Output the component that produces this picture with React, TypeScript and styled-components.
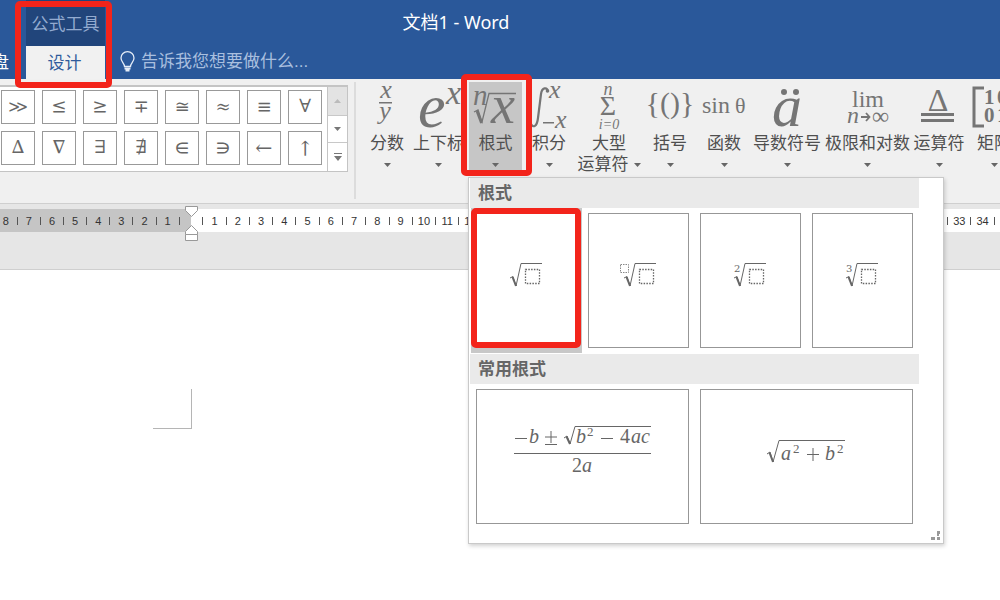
import React from "react";
import styled, { createGlobalStyle, css } from "styled-components";

const ui = `"Noto Sans", "Noto Sans CJK SC", sans-serif`;
const serif = `"Liberation Serif", serif`;

const GlobalStyle = createGlobalStyle`
  * { box-sizing: border-box; }
  body { margin: 0; background: #fff; font-family: ${ui}; font-size: 17px; overflow: hidden; }
  button { margin: 0; padding: 0; border: 0; background: none; font: inherit; color: inherit; cursor: pointer; }
  svg { display: block; overflow: visible; flex: none; }
`;

const Window = styled.div`
  min-height: 100vh;
  display: flex;
  flex-direction: column;
  overflow: hidden;
`;

const Header = styled.header`
  display: flex;
  height: 79px;
  background: #2a589a;
  color: #fff;
`;

const ClippedTab = styled.button`
  flex: none;
  width: 26px;
  height: 33px;
  align-self: flex-end;
  display: flex;
  justify-content: flex-end;
  align-items: center;
  padding: 0 17px 2px 0;
  white-space: nowrap;
  line-height: 24px;
`;

const ContextGroup = styled.div`
  position: relative;
  flex: none;
  width: 79px;
  display: flex;
  flex-direction: column;
`;

const ContextTitle = styled.div`
  height: 46px;
  display: flex;
  align-items: center;
  justify-content: center;
  padding-bottom: 2px;
  background: #21457b;
  color: #93abd0;
`;

const ActiveTab = styled.button`
  flex: 1;
  padding: 0 2px 3px 0;
  background: #f1f1f1;
  color: #2f5b9c;
`;

const HeaderMain = styled.div`
  flex: 1;
  min-width: 0;
  display: flex;
  flex-direction: column;
`;

const WindowTitle = styled.h1`
  margin: 0;
  height: 46px;
  padding-right: 193px;
  font-size: 18px;
  font-weight: 400;
  line-height: 44px;
  text-align: center;
`;

const TellMe = styled.label`
  flex: 1;
  display: flex;
  align-items: center;
  gap: 6px;
  padding: 0 0 2px 15px;
`;

const TellInput = styled.input`
  width: 240px;
  padding: 0;
  border: 0;
  outline: 0;
  background: none;
  color: #fff;
  font-family: "Liberation Sans", "Noto Sans CJK SC", sans-serif;
  font-size: 17px;
  &::placeholder { color: #a9bfdf; opacity: 1; }
`;

const Marker = styled.span<{ $inset: string }>`
  position: absolute;
  inset: ${(p) => p.$inset};
  border: 6px solid #f3241b;
  border-radius: 5px;
  pointer-events: none;
  z-index: 3;
`;

const Ribbon = styled.div`
  display: flex;
  align-items: flex-start;
  height: 125px;
  padding-top: 3px;
  background: #f0f0f0;
  border-bottom: 1px solid #cfcfcf;
`;

const Gallery = styled.div`
  flex: none;
  display: flex;
  height: 90px;
  padding-top: 3px;
`;

const SymbolGrid = styled.div`
  display: grid;
  grid-template-columns: repeat(8, 34px);
  grid-auto-rows: 34px;
  gap: 7px;
  padding: 3px 5px 4px 1px;
  background: #fff;
  border: solid #c4c4c4;
  border-width: 2px 1px 1px 0;
`;

const SymbolButton = styled.button`
  border: 1px solid #999;
  background: #fff;
  color: #666;
  font-family: "DejaVu Math TeX Gyre", "DejaVu Sans", sans-serif;
  font-size: 18px;
  line-height: 30px;
  overflow: hidden;
`;

const ScrollColumn = styled.div`
  width: 20px;
  display: grid;
  grid-template-rows: 28px 27px 1fr;
  border: solid #c4c4c4;
  border-width: 2px 1px 1px 0;
  background: #fff;
`;

const ScrollButton = styled.button<{ $off?: boolean }>`
  display: flex;
  align-items: center;
  justify-content: center;
  background: ${(p) => (p.$off ? "#e3e3e3" : "#fff")};
  color: ${(p) => (p.$off ? "#bbb" : "#777")};
  & + & { border-top: 1px solid #c8c8c8; }
`;

const Divider = styled.div`
  flex: none;
  width: 2px;
  height: 117px;
  margin: 0 10px 0 6px;
  background: #dcdcdc;
`;

const Tools = styled.div`
  display: flex;
  flex: 1;
  min-width: 0;
`;

const ToolSlot = styled.div<{ $w: number }>`
  position: relative;
  flex: none;
  width: ${(p) => p.$w}px;
`;

const ToolButton = styled.button<{ $open?: boolean }>`
  width: 100%;
  display: flex;
  flex-direction: column;
  align-items: center;
  color: #4f4f4f;
  ${(p) => p.$open && css`background: #c6c6c6;`}
`;

const ToolLine = styled.span`
  height: 21px;
  line-height: 21px;
  display: flex;
  align-items: center;
  justify-content: center;
  gap: 5px;
  white-space: nowrap;
  & > svg { margin-top: 2px; fill: #666; }
`;

const Panel = styled.div`
  position: absolute;
  top: 95px;
  left: -1px;
  width: 476px;
  z-index: 2;
  padding: 0 24px 13px 1px;
  background: #fff;
  border: 1px solid #c9c9c9;
  box-shadow: 1px 2px 4px rgba(0, 0, 0, 0.18);
`;

const SectionTitle = styled.h2`
  margin: 0;
  height: 30px;
  padding-left: 8px;
  background: #eaeaea;
  color: #666;
  font-size: 17px;
  font-weight: 700;
  line-height: 30px;
`;

const Cards = styled.div<{ $cols: number }>`
  display: grid;
  grid-template-columns: repeat(${(p) => p.$cols}, 1fr);
  gap: 11px;
  padding: 5px 6px 6px;
`;

const CardSlot = styled.div<{ $hover?: boolean }>`
  position: relative;
  display: flex;
  ${(p) => p.$hover && css`box-shadow: 0 0 0 5px #c8c8c8;`}
`;

const Card = styled.button`
  flex: 1;
  height: 135px;
  display: flex;
  align-items: center;
  justify-content: center;
  padding: 0 1px 12px 0;
  border: 1px solid #979797;
  background: #fff;
`;

const Grip = styled.span`
  position: absolute;
  right: 3px;
  bottom: 3px;
`;

const RulerZone = styled.div`
  height: 66px;
  padding-top: 5px;
  background: #e6e6e6;
  border-bottom: 1px solid #cfcfcf;
`;

const Ruler = styled.div`
  position: relative;
  display: flex;
  height: 23px;
  background: #fff;
`;

const RulerMargin = styled.div`
  flex: none;
  width: 191px;
  padding-right: 6px;
  background: #c5c5c5;
  display: flex;
`;

const RulerBody = styled.div`
  flex: 1;
  min-width: 0;
  padding-left: 6px;
  display: flex;
`;

const Scale = styled.div<{ $n: number }>`
  flex: 1;
  display: grid;
  grid-template-columns: repeat(${(p) => p.$n}, minmax(0, 1fr));
`;

const ScaleCell = styled.span`
  display: flex;
  align-items: center;
  justify-content: center;
  color: #333;
  font-family: "Liberation Sans", sans-serif;
  font-size: 11px;
`;

const Tick = styled.i`
  width: 1px;
  height: 8px;
  background: #555;
`;

const Indent = styled.span`
  position: absolute;
  left: 185px;
  top: -3px;
`;

const Page = styled.main`
  flex: 1;
  background: #fff;
  padding: 119px 0 0 153px;
`;

const MarginCorner = styled.div`
  width: 39px;
  height: 40px;
  border: solid #b5b5b5;
  border-width: 0 1px 1px 0;
`;

const Caret = ({ up = false }: { up?: boolean }) => (
  <svg width="7" height="4" viewBox="0 0 7 4" fill="currentColor">
    <path d={up ? "M0 4L3.500 0L7 4Z" : "M0 0H7L3.500 4Z"} />
  </svg>
);

type GlyphProps = { x: number; y: number; s: number; up?: boolean; bold?: boolean; mid?: boolean; children: React.ReactNode };
const Glyph = ({ x, y, s, up, bold, mid, children }: GlyphProps) => (
  <text
    x={x}
    y={y}
    fontSize={s}
    fontFamily={serif}
    fontStyle={up ? "normal" : "italic"}
    fontWeight={bold ? 700 : 400}
    textAnchor={mid ? "middle" : "start"}
  >
    {children}
  </text>
);

const ToolIcon = ({ w, children }: { w: number; children: React.ReactNode }) => (
  <svg width={w} height="50" viewBox={`0 0 ${w} 50`} fill="#757575" stroke="none" aria-hidden="true">
    {children}
  </svg>
);

type Tool = { id: string; w: number; lines: string[]; icon: React.ReactNode };

const tools: Tool[] = [
  {
    id: "fraction", w: 42, lines: ["分数"],
    icon: (<><Glyph x={20} y={16} s={26} mid>x</Glyph><path d="M13 20H26V21.500H13Z" /><Glyph x={19} y={37} s={26} mid>y</Glyph></>),
  },
  {
    id: "script", w: 61, lines: ["上下标"],
    icon: (<><Glyph x={10} y={45} s={62}>e</Glyph><Glyph x={38} y={22} s={34}>x</Glyph></>),
  },
  {
    id: "radical", w: 53, lines: ["根式"],
    icon: (
      <>
        <Glyph x={4} y={23} s={29}>n</Glyph>
        <Glyph x={22} y={41} s={54}>x</Glyph>
        <path d="M5 30L9 28L13 40L20 11.500H47" fill="none" stroke="#757575" strokeWidth="1.300" />
        <path d="M8 29L12.500 41" stroke="#757575" strokeWidth="2.800" />
      </>
    ),
  },
  {
    id: "integral", w: 54, lines: ["积分"],
    icon: (
      <>
        <path d="M26 9C25 5 20 5 19 12L16 36C15 45 11 46 9 42" fill="none" stroke="#757575" strokeWidth="2.200" />
        <circle cx="25.500" cy="9" r="1.800" />
        <Glyph x={27} y={16} s={26}>x</Glyph>
        <path d="M21 40H32V41.500H21Z" />
        <Glyph x={33} y={46} s={26}>x</Glyph>
      </>
    ),
  },
  {
    id: "large", w: 66, lines: ["大型", "运算符"],
    icon: (<><Glyph x={32} y={13} s={18} mid>n</Glyph><Glyph x={32} y={33} s={28} up mid>Σ</Glyph><Glyph x={33} y={47} s={14} mid>i=0</Glyph></>),
  },
  { id: "bracket", w: 56, lines: ["括号"], icon: <Glyph x={28} y={31} s={30} up mid>{"{()}"}</Glyph> },
  {
    id: "function", w: 52, lines: ["函数"],
    icon: (<><Glyph x={4} y={31} s={24} up>sin</Glyph><Glyph x={37} y={31} s={22} up>θ</Glyph></>),
  },
  {
    id: "accent", w: 74, lines: ["导数符号"],
    icon: (<><Glyph x={22} y={44} s={60}>a</Glyph><circle cx="34" cy="10" r="3" /><circle cx="46" cy="10" r="3" /></>),
  },
  {
    id: "limit", w: 87, lines: ["极限和对数"],
    icon: (
      <>
        <Glyph x={28} y={25} s={24} up>lim</Glyph>
        <Glyph x={23} y={41} s={24}>n</Glyph>
        <path d="M37 35H45M42 31L45.500 35L42 39" fill="none" stroke="#757575" strokeWidth="1.800" />
        <Glyph x={48} y={42} s={24} up>∞</Glyph>
      </>
    ),
  },
  {
    id: "operator", w: 56, lines: ["运算符"],
    icon: (<><Glyph x={27} y={29} s={32} up mid>Δ</Glyph><path d="M10 31H43V34H10ZM10 37H43V40H10Z" /></>),
  },
  {
    id: "matrix", w: 54, lines: ["矩阵"],
    icon: (
      <>
        <path d="M17 6H7V44H17" fill="none" stroke="#757575" strokeWidth="3" />
        <Glyph x={17} y={22} s={21} up bold>1</Glyph><Glyph x={30} y={22} s={21} up bold>0</Glyph>
        <Glyph x={17} y={40} s={21} up bold>0</Glyph><Glyph x={30} y={40} s={21} up bold>1</Glyph>
      </>
    ),
  },
];

const symbols = ["≫", "≤", "≥", "∓", "≅", "≈", "≡", "∀", "∆", "∇", "∃", "∄", "∈", "∋", "←", "↑"];

const Radical = ({ x }: { x: number }) => (
  <g fill="none" stroke="#666">
    <path d={`M${x} 16L${x + 3} 14.500L${x + 6} 24L${x + 11} 1.500H${x + 32}`} />
    <path d={`M${x + 2.5} 15L${x + 6} 24`} strokeWidth="2" />
    <rect x={x + 15.5} y="7.500" width="14" height="14" strokeWidth="1.300" strokeDasharray="1.500 1.300" />
  </g>
);

const RadicalCard = ({ index }: { index: "" | "□" | "2" | "3" }) => {
  const shift = index === "□" ? 4 : 0;
  return (
    <svg width={32 + shift} height="25" viewBox={`0 0 ${32 + shift} 25`} aria-hidden="true">
      <Radical x={shift} />
      {index === "□" && <rect x="0.500" y="2.500" width="8" height="8" fill="none" stroke="#888" strokeDasharray="1.500 1" />}
      {(index === "2" || index === "3") && (
        <text x="0" y="10" fontSize="10" fontFamily="DejaVu Serif" fill="#666">{index}</text>
      )}
    </svg>
  );
};

const Quadratic = () => (
  <svg width="137" height="56" viewBox="0 0 137 56" fill="#666" aria-hidden="true">
    <path d="M1 15.500H13M87 15.500H99M31 14H43M37 8V20M31 21.500H43M0 30.500H137" fill="none" stroke="#666" />
    <path d="M50 15L53 13L56 21L61 3.500H137" fill="none" stroke="#666" />
    <path d="M52.500 13.500L56 21" stroke="#666" strokeWidth="2" />
    <Glyph x={15} y={20} s={20}>b</Glyph>
    <Glyph x={62} y={20} s={20}>b</Glyph>
    <Glyph x={73} y={13} s={13} up>2</Glyph>
    <Glyph x={106} y={20} s={20} up>4</Glyph>
    <Glyph x={117} y={20} s={20}>ac</Glyph>
    <Glyph x={58} y={49} s={20} up>2</Glyph>
    <Glyph x={68} y={49} s={20}>a</Glyph>
  </svg>
);

const Hypotenuse = () => (
  <svg width="78" height="26" viewBox="0 0 78 26" fill="#666" aria-hidden="true">
    <path d="M0 16L3 14L6 24L12 2.500H78M40 16.500H52M46 10V23" fill="none" stroke="#666" />
    <path d="M2.500 14.500L6 24" stroke="#666" strokeWidth="2" />
    <Glyph x={14} y={22} s={20}>a</Glyph>
    <Glyph x={26} y={15} s={13} up>2</Glyph>
    <Glyph x={58} y={22} s={20}>b</Glyph>
    <Glyph x={70} y={15} s={13} up>2</Glyph>
  </svg>
);

const RadicalPanel = () => (
  <Panel>
    <SectionTitle>根式</SectionTitle>
    <Cards $cols={4}>
      <CardSlot $hover>
        <Card aria-label="平方根"><RadicalCard index="" /></Card>
        <Marker $inset="-5px -4px 0 -5px" />
      </CardSlot>
      <CardSlot><Card aria-label="带有次数的根式"><RadicalCard index="□" /></Card></CardSlot>
      <CardSlot><Card aria-label="二次平方根"><RadicalCard index="2" /></Card></CardSlot>
      <CardSlot><Card aria-label="立方根"><RadicalCard index="3" /></Card></CardSlot>
    </Cards>
    <SectionTitle>常用根式</SectionTitle>
    <Cards $cols={2}>
      <CardSlot><Card aria-label="二次公式"><Quadratic /></Card></CardSlot>
      <CardSlot><Card aria-label="勾股"><Hypotenuse /></Card></CardSlot>
    </Cards>
    <Grip>
      <svg width="9" height="9" viewBox="0 0 9 9" fill="#999">
        <path d="M6 0H9V3H6ZM6 6H9V9H6ZM0 6H4V9H0ZM6 3H8V5H6Z" />
      </svg>
    </Grip>
  </Panel>
);

const marks = (nums: number[], tickFirst: boolean) =>
  nums.flatMap((n) => {
    const tick = <ScaleCell key={`t${n}`}><Tick /></ScaleCell>;
    const num = <ScaleCell key={n}>{n}</ScaleCell>;
    return tickFirst ? [tick, num] : [num, tick];
  });

export default function App() {
  return (
    <Window>
      <GlobalStyle />
      <Header>
        <ClippedTab>盘</ClippedTab>
        <ContextGroup>
          <ContextTitle>公式工具</ContextTitle>
          <ActiveTab>设计</ActiveTab>
          <Marker $inset="1px -7px -9px -11px" />
        </ContextGroup>
        <HeaderMain>
          <WindowTitle>文档1 - Word</WindowTitle>
          <TellMe>
            <svg width="15" height="21" viewBox="0 0 15 21" fill="none" stroke="#e4ecf7" strokeWidth="1.300" aria-hidden="true">
              <path d="M4.500 15.500C4.500 12 1 11 1 7A6.500 6.300 0 0 1 14 7C14 11 10.500 12 10.500 15.500Z" />
              <path d="M4.500 17.500H10.500M5.500 19.500H9.500" strokeWidth="2" />
            </svg>
            <TellInput aria-label="告诉我您想要做什么" placeholder="告诉我您想要做什么..." />
          </TellMe>
        </HeaderMain>
      </Header>

      <Ribbon>
        <Gallery>
          <SymbolGrid>
            {symbols.map((s) => <SymbolButton key={s}>{s}</SymbolButton>)}
          </SymbolGrid>
          <ScrollColumn>
            <ScrollButton $off aria-label="上一行"><Caret up /></ScrollButton>
            <ScrollButton aria-label="下一行"><Caret /></ScrollButton>
            <ScrollButton aria-label="其他">
              <svg width="8" height="8" viewBox="0 0 8 8" fill="currentColor">
                <path d="M0 0H8V1H0ZM0 3H8L4 8Z" />
              </svg>
            </ScrollButton>
          </ScrollColumn>
        </Gallery>
        <Divider />
        <Tools>
          {tools.map((t) => (
            <ToolSlot key={t.id} $w={t.w}>
              <ToolButton $open={t.id === "radical"}>
                <ToolIcon w={t.w}>{t.icon}</ToolIcon>
                <ToolLine>{t.lines[0]}</ToolLine>
                <ToolLine>{t.lines[1]}<Caret /></ToolLine>
              </ToolButton>
              {t.id === "radical" && <Marker $inset="-8px -10px -2px -8px" />}
              {t.id === "radical" && <RadicalPanel />}
            </ToolSlot>
          ))}
        </Tools>
      </Ribbon>

      <RulerZone>
        <Ruler>
          <RulerMargin><Scale $n={16}>{marks([8, 7, 6, 5, 4, 3, 2, 1], false)}</Scale></RulerMargin>
          <RulerBody>
            <Scale $n={69}>
              {marks(Array.from({ length: 34 }, (_, i) => i + 1), true)}
              <ScaleCell><Tick /></ScaleCell>
            </Scale>
          </RulerBody>
          <Indent>
            <svg width="13" height="36" viewBox="0 0 13 36" fill="#fff" stroke="#999">
              <path d="M0.500 0.500H12.500V4.500L6.500 10.500L0.500 4.500Z" />
              <path d="M6.500 19.500L12.500 25.500V28.500H0.500V25.500Z" />
              <path d="M0.500 28.500H12.500V34.500H0.500Z" />
            </svg>
          </Indent>
        </Ruler>
      </RulerZone>

      <Page><MarginCorner /></Page>
    </Window>
  );
}
